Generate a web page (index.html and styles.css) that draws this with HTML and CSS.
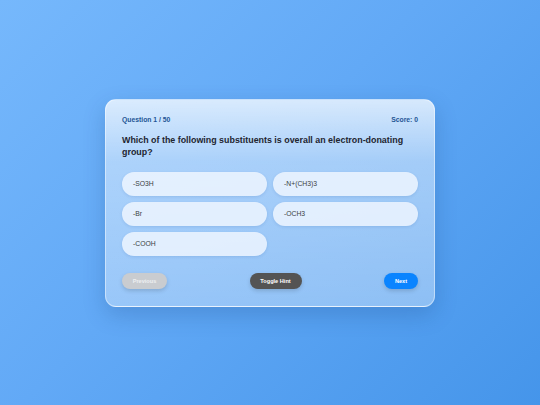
FILE: index.html
```html
<!DOCTYPE html>
<html>
<head>
<meta charset="utf-8">
<link rel="stylesheet" href="styles.css">
</head>
<body>
<div class="card">
  <div class="header">
    <span class="qnum">Question 1 / 50</span>
    <span class="score">Score: 0</span>
  </div>
  <div class="question">Which of the following substituents is overall an electron-donating group?</div>
  <div class="options">
    <div class="option">-SO3H</div>
    <div class="option">-N+(CH3)3</div>
    <div class="option">-Br</div>
    <div class="option">-OCH3</div>
    <div class="option">-COOH</div>
  </div>
  <div class="controls">
    <button class="btn prev">Previous</button>
    <button class="btn hint">Toggle Hint</button>
    <button class="btn next">Next</button>
  </div>
</div>
</body>
</html>
```
FILE: styles.css
```css
html, body {
  margin: 0;
  padding: 0;
  height: 100%;
}
body {
  font-family: "Liberation Sans", Arial, sans-serif;
  background: linear-gradient(135deg, #76b8fc 0%, #62a9f6 45%, #4595ea 100%);
  display: flex;
  align-items: center;
  justify-content: center;
}
.card {
  width: 296px;
  padding: 16px 16px 17px;
  border-radius: 11px;
  background: linear-gradient(180deg, rgba(255,255,255,0.75) 0%, rgba(255,255,255,0.45) 30%, rgba(255,255,255,0.35) 100%);
  border: 1px solid rgba(255,255,255,0.45);
  box-shadow: 0 8px 22px rgba(20,60,120,0.22);
}
.header {
  display: flex;
  justify-content: space-between;
  font-size: 6.8px;
  font-weight: bold;
  color: #1f5595;
  line-height: 8px;
}
.question {
  margin-top: 10px;
  font-size: 8.9px;
  font-weight: bold;
  color: #1e2530;
  line-height: 12.5px;
}
.options {
  margin-top: 13px;
  display: grid;
  grid-template-columns: 1fr 1fr;
  gap: 6px 6px;
}
.option {
  height: 24px;
  display: flex;
  align-items: center;
  padding-left: 11px;
  border-radius: 12px;
  background: rgba(240,247,255,0.82);
  box-shadow: 0 1px 3px rgba(40,90,160,0.15);
  font-size: 6.8px;
  color: #3a3d42;
}
.controls {
  margin-top: 17px;
  display: flex;
  justify-content: space-between;
  align-items: center;
}
.btn {
  border: none;
  height: 16px;
  border-radius: 8px;
  font-family: "Liberation Sans", Arial, sans-serif;
  font-size: 5.6px;
  font-weight: bold;
  color: #fff;
  padding: 0;
  box-shadow: 0 2px 4px rgba(0,0,0,0.15);
}
.prev {
  width: 45px;
  background: #c9ccd0;
  color: #eef0f2;
}
.hint {
  width: 52px;
  background: #545454;
}
.next {
  width: 34px;
  background: #0a84ff;
}
```
